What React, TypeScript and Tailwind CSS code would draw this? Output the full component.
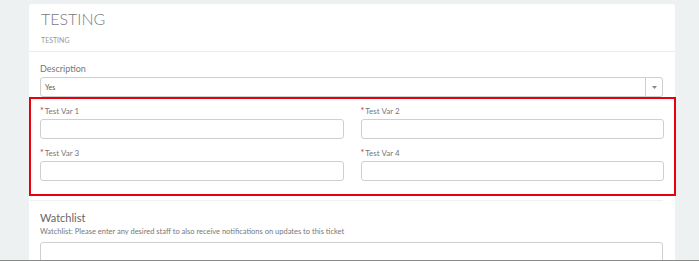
import React from "react";

function Field({ label }: { label: string }) {
  return (
    <div className="flex flex-col">
      <div className="flex items-start h-[10px] text-[8px] leading-[10px] text-[#777]">
        <span className="text-[#e0281f] text-[9px] leading-[9px] mr-[1px]">*</span>
        <span>{label}</span>
      </div>
      <div className="mt-[3px] h-[20px] border border-[#cfcfcf] rounded-[3px] bg-white" />
    </div>
  );
}

export default function App() {
  return (
    <div className="w-[699px] h-[261px] bg-[#eef1f2] flex flex-col font-['Lato',sans-serif] overflow-hidden">
      <div className="flex-1 overflow-hidden pl-[29px] pt-[4px]">
        <div className="w-[646px] bg-white rounded-t-[3px]">
          <div className="px-[12px] pt-[4px] pb-[6px] border-b border-[#ececec]">
            <div className="text-[16px] leading-[22px] font-light text-[#7a7a7a]">TESTING</div>
            <div className="mt-[5px] text-[7px] leading-[10px] text-[#999]">TESTING</div>
          </div>
          <div className="pt-[11px]">
            <div className="pl-[11px] pr-[12px]">
              <div className="text-[9px] leading-[12px] text-[#777]">Description</div>
              <div className="mt-[2px] h-[20px] border border-[#cfcfcf] rounded-[3px] flex items-stretch">
                <div className="flex-1 flex items-center pl-[4px] text-[7px] text-[#555]">Yes</div>
                <div className="w-[17px] border-l border-[#cfcfcf] flex items-center justify-center">
                  <svg width="5" height="3" viewBox="0 0 5 3">
                    <path d="M0 0 L5 0 L2.5 3 Z" fill="#888" />
                  </svg>
                </div>
              </div>
            </div>
            <div className="mr-[-1px] border-2 border-[#e8000e] pl-[9px] pr-[10px] pt-[7px] pb-[13px] grid grid-cols-2 gap-x-[17px] gap-y-[9px]">
              <Field label="Test Var 1" />
              <Field label="Test Var 2" />
              <Field label="Test Var 3" />
              <Field label="Test Var 4" />
            </div>
            <div className="mt-[4px] mr-[12px] ml-[1px] border-t border-[#f0f0f0]" />
            <div className="pl-[11px] pr-[12px] pt-[10px]">
              <div className="text-[11px] leading-[14px] text-[#666]">Watchlist</div>
              <div className="mt-[2px] text-[7.5px] leading-[10px] text-[#777]">
                Watchlist: Please enter any desired staff to also receive notifications on updates to this ticket
              </div>
              <div className="mt-[5px] h-[24px] border border-[#cfcfcf] rounded-[3px]" />
            </div>
          </div>
        </div>
      </div>
      <div className="h-px bg-[#8a8a8a]" />
    </div>
  );
}
